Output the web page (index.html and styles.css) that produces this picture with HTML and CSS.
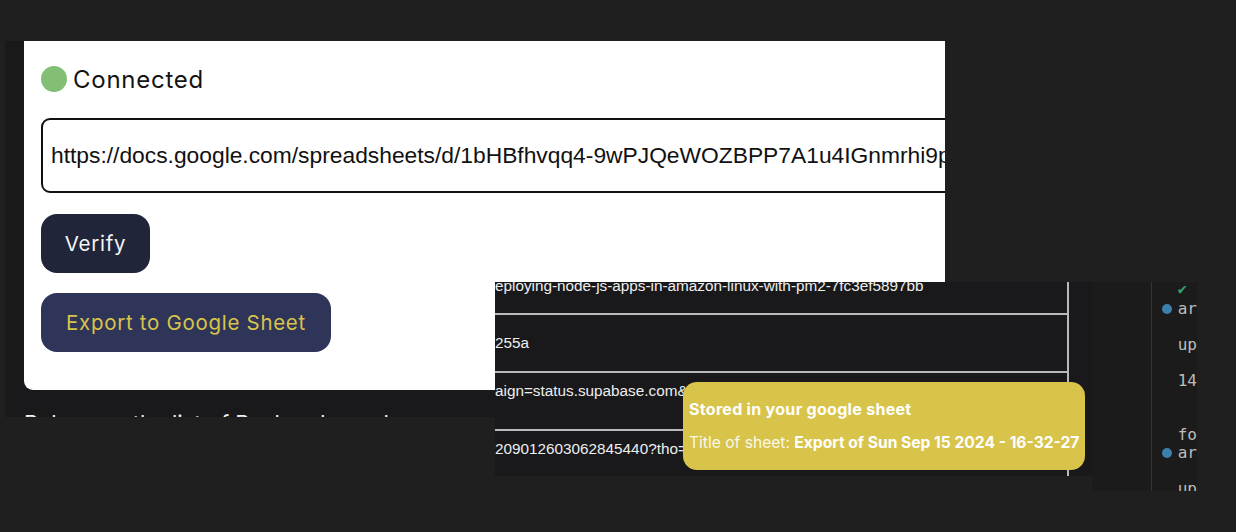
FILE: index.html
```html
<!DOCTYPE html>
<html lang="en">
<head>
<meta charset="utf-8">
<title>Export to Google Sheet</title>
<link rel="stylesheet" href="styles.css">
</head>
<body>
<div class="canvas">
  <section class="shot shot-app">
    <p class="behind-text">Below are the list of Backend panels</p>
  </section>
  <section class="card">
    <div class="status">
      <span class="status-dot"></span>
      <span>Connected</span>
    </div>
    <div class="url-field">https://docs.google.com/spreadsheets/d/1bHBfhvqq4-9wPJQeWOZBPP7A1u4IGnmrhi9pQzXw</div>
    <div class="actions">
      <button class="btn btn-verify">Verify</button>
      <button class="btn btn-export">Export to Google Sheet</button>
    </div>
  </section>
  <section class="shot shot-table">
    <div class="table">
      <div class="row row-first">eploying-node-js-apps-in-amazon-linux-with-pm2-7fc3ef5897bb</div>
      <div class="row">255a</div>
      <div class="row row-raised">aign=status.supabase.com&amp;</div>
      <div class="row row-raised">209012603062845440?tho=</div>
    </div>
  </section>
  <section class="shot shot-term">
    <div class="term-gutter"></div>
    <div class="term-lines">
      <div class="term-line"><span class="tick">✔</span></div>
      <div class="term-line"><span class="dot"></span>ar</div>
      <div class="term-line gap1">up</div>
      <div class="term-line gap1">14</div>
      <div class="term-line gap2">fo</div>
      <div class="term-line"><span class="dot"></span>ar</div>
      <div class="term-line gap1">up</div>
    </div>
  </section>
  <aside class="toast">
    <p class="toast-title">Stored in your google sheet</p>
    <p class="toast-body">Title of sheet: <strong>Export of Sun Sep 15 2024 - 16-32-27</strong></p>
  </aside>
</div>
</body>
</html>
```
FILE: styles.css
```css
* { box-sizing: border-box; }
html, body { margin: 0; height: 100%; }
body { background: #1f1f1f; overflow: hidden; }
.canvas { position: relative; width: 1236px; height: 532px; overflow: hidden; }

.shot { position: absolute; overflow: hidden; background: #19191b; }

.shot-app { left: 5px; top: 41px; width: 490px; height: 376px; }
.behind-text {
  margin: 0;
  padding: 368px 0 0 19px;
  color: #f2f2f2;
  font: 22px/28px Inter, sans-serif;
  white-space: nowrap;
}

.card {
  position: absolute;
  left: 24px; top: 41px;
  width: 921px; height: 349px;
  padding: 25px 0 0 17px;
  background: #fff;
  border-bottom-left-radius: 9px;
  overflow: hidden;
  font-family: Inter, "Noto Sans", sans-serif;
}
.status {
  display: flex;
  align-items: center;
  gap: 6px;
  height: 26px;
  font-size: 24px;
  letter-spacing: .75px;
  color: #141414;
}
.status-dot { width: 26px; height: 26px; border-radius: 50%; background: #82bf74; }
.url-field {
  width: 1100px;
  height: 75px;
  margin-top: 26px;
  padding-left: 8px;
  display: flex;
  align-items: center;
  border: 2px solid #111;
  border-radius: 9px;
  font: 22.8px "Liberation Sans", Arial, sans-serif;
  color: #111;
  white-space: nowrap;
}
.actions { display: flex; flex-direction: column; align-items: flex-start; gap: 20px; margin-top: 21px; }
.btn {
  height: 59px;
  padding: 0;
  border: 0;
  border-radius: 16px;
  font: 400 20.5px Inter, "Noto Sans", sans-serif;
  letter-spacing: .7px;
}
.btn-verify { width: 109px; background: #212539; color: #f4f4f6; }
.btn-export { width: 290px; background: #2f3558; color: #d8c44a; }

.shot-table { left: 495px; top: 282px; width: 597px; height: 194px; }
.table {
  width: 574px;
  height: 100%;
  border-right: 2px solid #b9b9bb;
  font: 15.3px "Liberation Sans", Arial, sans-serif;
  color: #eee;
  white-space: nowrap;
}
.row {
  height: 58px;
  padding-top: 18px;
  line-height: 20px;
  border-bottom: 2px solid #b9b9bb;
}
.row-first { height: 33px; padding-top: 0; line-height: 8px; }
.row-raised { padding-top: 8px; }
.row:last-child { border-bottom: 0; }

.shot-term {
  left: 1092px; top: 282px;
  width: 105px; height: 209px;
  background: #1b1b1c;
  display: flex;
}
.term-gutter { width: 60px; border-right: 1px solid #333; }
.term-lines {
  padding-left: 26px;
  font: 16px/18px "DejaVu Sans Mono", monospace;
  color: #bdbdbd;
}
.term-line { position: relative; height: 18px; white-space: nowrap; }
.tick { color: #2fa56a; font-size: 15px; position: relative; top: -2px; }
.gap1 { margin-top: 18px; }
.gap2 { margin-top: 36px; }
.dot {
  position: absolute;
  left: -16px; top: 4px;
  width: 10px; height: 10px;
  border-radius: 50%;
  background: #3a81ae;
}

.toast {
  position: absolute;
  left: 683px; top: 382px;
  width: 402px; height: 88px;
  padding: 18px 0 0 6px;
  background: #d8c44a;
  border-radius: 14px;
  color: #fbf8e6;
  font: 15.6px/18px Inter, "Noto Sans", sans-serif;
  white-space: nowrap;
}
.toast p { margin: 0; }
.toast-title { font-size: 16px; letter-spacing: .3px; font-weight: 700; color: #fff; }
.toast .toast-body { margin-top: 16px; }
.toast-body strong { color: #fff; font-weight: 700; }
```
